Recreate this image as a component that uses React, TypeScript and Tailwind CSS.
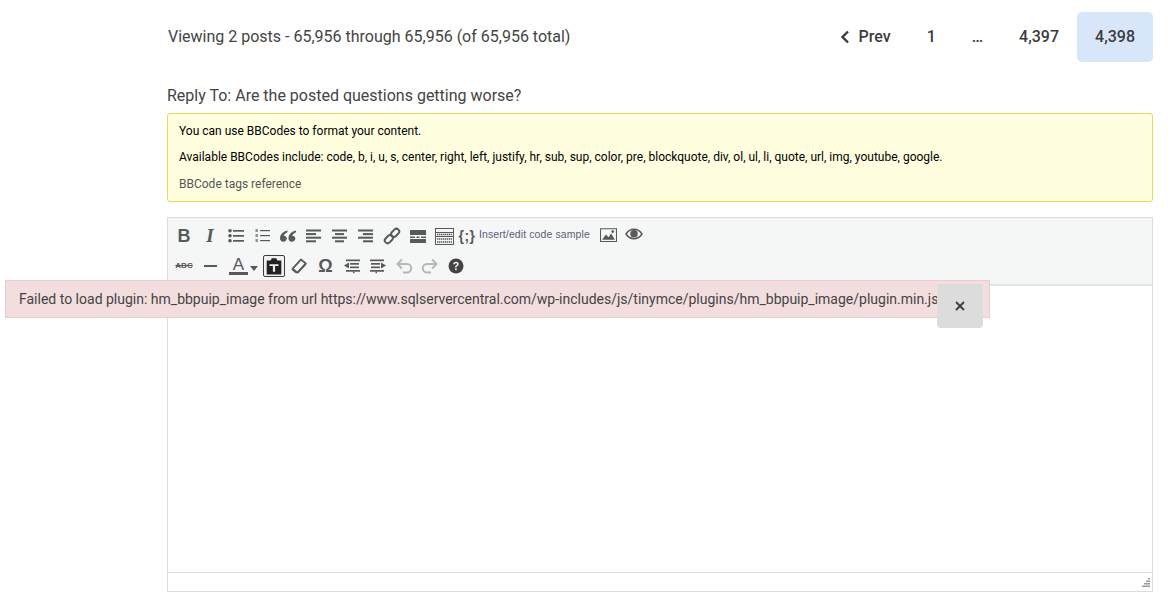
import type { ReactNode } from "react";

const Svg = ({ children, size = 16 }: { children: ReactNode; size?: number }) => (
  <svg width={size} height={size} viewBox="0 0 16 16" fill="currentColor">
    {children}
  </svg>
);

const Lines = ({ rows }: { rows: [number, number][] }) => (
  <Svg>
    {rows.map(([x, w], i) => (
      <rect key={i} x={x} y={1.5 + i * 3.6} width={w} height="2" />
    ))}
  </Svg>
);

const Btn = ({ children, w = "w-[26px]", className = "" }: { children: ReactNode; w?: string; className?: string }) => (
  <div className={`flex h-[26px] items-center justify-center text-[#595959] ${w} ${className}`}>{children}</div>
);

const BulletList = () => (
  <Svg>
    {[2, 7, 12].map((y) => (
      <g key={y}>
        <circle cx="2" cy={y + 0.8} r="1.8" />
        <rect x="5" y={y} width="11" height="1.7" />
      </g>
    ))}
  </Svg>
);

const NumberList = () => (
  <Svg>
    {[2, 7, 12].map((y) => (
      <g key={y}>
        <rect x="1.5" y={y - 1} width="2.4" height="3" opacity="0.65" />
        <rect x="6" y={y} width="10" height="1.2" />
      </g>
    ))}
  </Svg>
);

const Quote = () => (
  <Svg>
    <path d="M7.500 2.500C3 3.500 0 6.500 0 10.300c0 2.200 1.300 3.400 3.300 3.400S6.800 12.300 6.800 10.500 5.500 7.700 3.800 7.700c.3-1.500 1.800-2.800 3.700-3.500zM16 2.500c-4.500 1-7.500 4-7.500 7.800 0 2.200 1.300 3.400 3.300 3.400s3.500-1.400 3.500-3.200-1.300-2.800-3-2.800c.3-1.500 1.800-2.800 3.700-3.500z" />
  </Svg>
);

const LinkIcon = () => (
  <svg width="18" height="18" viewBox="0 0 18 18" fill="none" stroke="currentColor" strokeWidth="2">
    <rect x="-4.500" y="-2.800" width="9" height="5.600" rx="2.800" transform="translate(5.800 12.200) rotate(-45)" />
    <rect x="-4.500" y="-2.800" width="9" height="5.600" rx="2.800" transform="translate(12.200 5.800) rotate(-45)" />
  </svg>
);

const PageBreak = () => (
  <Svg>
    <rect x="0" y="2" width="16" height="5" />
    <rect x="0" y="11" width="16" height="4" />
    <rect x="0" y="8.500" width="5" height="1.500" />
    <rect x="6.500" y="8.500" width="3" height="1.500" />
    <rect x="11" y="8.500" width="5" height="1.500" />
  </Svg>
);

const Keyboard = () => (
  <svg width="19" height="17" viewBox="0 0 19 17" fill="none" stroke="currentColor">
    <rect x="0.500" y="0.500" width="18" height="16" />
    <path d="M1 4.500h17M1 8.500h17" strokeWidth="1" />
    <path d="M2 6.500h15M2 11h15M2 14h15" strokeWidth="1.600" strokeDasharray="1.400 .6" />
  </svg>
);

const ImageIcon = () => (
  <Svg size={17}>
    <path fillRule="evenodd" d="M0 2h16v13H0zM1 3v11h14V3z" />
    <path d="M2 13l3.500-5 2.500 2.500L10.500 7 14 13z" />
    <circle cx="12" cy="5.200" r="1.300" />
  </Svg>
);

const Eye = () => (
  <svg width="18" height="14" viewBox="0 0 18 14" fill="none" stroke="currentColor" strokeWidth="1.500">
    <path d="M1 7c2-3 4.800-4.700 8-4.700S15 4 17 7c-2 3-4.800 4.700-8 4.700S3 10 1 7z" />
    <circle cx="9" cy="6.800" r="3" fill="currentColor" />
  </svg>
);

const Paste = () => (
  <Svg size={18}>
    <path fillRule="evenodd" d="M1.500 3H5l1-2h4l1 2h3.500v12.500h-13zM4 6.500V8h3v5h2V8h3V6.500z" />
  </Svg>
);

const Eraser = () => (
  <svg width="16" height="16" viewBox="0 0 16 16" fill="none" stroke="currentColor" strokeWidth="1.500">
    <path d="M10 1.500l4.500 3.500a1 1 0 0 1 0 1.500L7 14.500H5L1.800 12a1 1 0 0 1 0-1.500z" />
    <path d="M1.800 10.500l4.500 4L14.500 5.500 10 1.500z" fill="none" />
  </svg>
);

const Indent = ({ flip = false }: { flip?: boolean }) => (
  <Svg>
    <g transform={flip ? "translate(16 0) scale(-1 1)" : undefined}>
      <rect x="2" y="1.500" width="14" height="1.700" />
      <rect x="6" y="5" width="9" height="1.700" />
      <rect x="6" y="8.500" width="9" height="1.700" />
      <rect x="2" y="12" width="14" height="1.700" />
      <path d="M5 4.500v6L0 7.500z" />
      <rect x="9" y="13.700" width="1.500" height="1.500" />
    </g>
  </Svg>
);

const Undo = ({ flip = false }: { flip?: boolean }) => (
  <svg width="18" height="16" viewBox="0 0 18 16" fill="none" stroke="currentColor" strokeWidth="2" className={flip ? "-scale-x-100" : ""}>
    <path d="M3 6h9a4.200 4.200 0 0 1 0 8.500H8" />
    <path d="M6.800 1.500L2.500 6l4.300 4.500" />
  </svg>
);

const Help = () => (
  <svg width="16" height="16" viewBox="0 0 16 16">
    <circle cx="8" cy="8" r="7.500" fill="currentColor" />
    <path d="M5.300 6.200C5.400 4.600 6.500 3.800 8 3.800s2.700.9 2.700 2.200c0 1.100-.7 1.600-1.400 2.100-.6.400-.8.700-.8 1.400H7.100c0-1.200.4-1.700 1.100-2.200.6-.4.900-.7.900-1.200s-.5-.9-1.100-.9-1.100.4-1.200 1z" fill="#f5f6f6" />
    <rect x="7.100" y="10.400" width="1.600" height="1.700" fill="#f5f6f6" />
  </svg>
);

const Page = ({ children, active = false }: { children: ReactNode; active?: boolean }) => (
  <div className={`flex h-[50px] items-center gap-[9px] rounded-[5px] px-[18px] font-medium text-[#3c3c3c] ${active ? "bg-[#d8e6fa]" : ""}`}>
    {children}
  </div>
);

export default function App() {
  return (
    <div className="relative h-[603px] w-[1176px] overflow-hidden bg-white pl-[167px] pr-[23px] pt-3 font-['Roboto',sans-serif] text-base text-[#444]">
      <div className="flex items-center justify-between pl-px">
        <span>Viewing 2 posts - 65,956 through 65,956 (of 65,956 total)</span>
        <div className="flex items-center">
          <Page>
            <svg width="10" height="14" viewBox="0 0 10 14" fill="none" stroke="currentColor" strokeWidth="2.400">
              <path d="M8 1.500L2.500 7 8 12.500" />
            </svg>
            Prev
          </Page>
          <Page>1</Page>
          <Page>…</Page>
          <Page>4,397</Page>
          <Page active>4,398</Page>
        </div>
      </div>

      <div className="mt-[22px] h-6 leading-6">Reply To: Are the posted questions getting worse?</div>

      <div className="mt-[5px] flex h-[89px] flex-col gap-2 rounded-[3px] border border-[#e6db55] bg-[#ffffe0] px-[11px] pt-2 text-xs leading-[18px] text-black">
        <p>You can use BBCodes to format your content.</p>
        <p>Available BBCodes include: code, b, i, u, s, center, right, left, justify, hr, sub, sup, color, pre, blockquote, div, ol, ul, li, quote, url, img, youtube, google.</p>
        <p className="mt-px text-[#555]">BBCode tags reference</p>
      </div>

      <div className="mt-[15px] flex h-[375px] flex-col border border-[#ddd]">
        <div className="flex h-[68px] flex-col gap-1 border-b-2 border-[#e2e4e7] bg-[#f5f6f6] pl-[3px] pt-[5px]">
          <div className="flex h-[26px] items-center">
            <Btn><span className="font-['Liberation_Sans',sans-serif] text-[18px] font-bold">B</span></Btn>
            <Btn><span className="font-['Liberation_Serif',serif] text-[19px] font-bold italic">I</span></Btn>
            <Btn><BulletList /></Btn>
            <Btn><NumberList /></Btn>
            <Btn><Quote /></Btn>
            <Btn><Lines rows={[[0, 15], [0, 10], [0, 15], [0, 10]]} /></Btn>
            <Btn><Lines rows={[[0, 15], [3, 9], [0, 15], [3, 9]]} /></Btn>
            <Btn><Lines rows={[[0, 15], [5, 10], [0, 15], [5, 10]]} /></Btn>
            <Btn><LinkIcon /></Btn>
            <Btn><PageBreak /></Btn>
            <Btn><Keyboard /></Btn>
            <Btn w="w-[20px]"><span className="font-['Liberation_Sans',sans-serif] text-[14px] font-bold tracking-[0.5px]">{"{;}"}</span></Btn>
            <span className="mb-1 ml-[2px] w-[116px] whitespace-nowrap font-['Liberation_Sans',sans-serif] text-[10.500px] leading-4 tracking-[0.1px] text-[#595f7a]">Insert/edit code sample</span>
            <Btn className="mb-1"><ImageIcon /></Btn>
            <Btn className="mb-1"><Eye /></Btn>
          </div>
          <div className="flex h-[26px] items-center">
            <Btn><span className="font-['Liberation_Sans',sans-serif] text-[8px] font-bold leading-none line-through">ABC</span></Btn>
            <Btn><div className="h-[2px] w-[13px] bg-current" /></Btn>
            <Btn w="w-[36px]" className="justify-start pl-[6px]">
              <span className="w-[19px] border-b-[3px] border-current text-center font-['Liberation_Sans',sans-serif] text-[17px] leading-[15px]">A</span>
              <span className="ml-[2px] mt-1 border-x-[4px] border-t-[5px] border-x-transparent border-t-current" />
            </Btn>
            <div className="ml-[4px] flex h-[22px] w-[22px] items-center justify-center rounded-[2px] border border-[#3c3c3c] bg-[#f0f0f0] text-[#222]">
              <Paste />
            </div>
            <Btn w="w-[28px]"><Eraser /></Btn>
            <Btn w="w-[25px]"><span className="font-['Liberation_Sans',sans-serif] text-[18px] font-bold">Ω</span></Btn>
            <Btn w="w-[27px]"><Indent /></Btn>
            <Btn w="w-[26px]"><Indent flip /></Btn>
            <Btn className="!text-[#b5b8bb]"><Undo /></Btn>
            <Btn className="!text-[#b5b8bb]"><Undo flip /></Btn>
            <Btn className="!text-[#444]"><Help /></Btn>
          </div>
        </div>
        <div className="flex-1 bg-white" />
        <div className="flex h-[19px] shrink-0 items-end justify-end border-t border-[#ddd] pb-[3px] pr-[2px]">
          <svg width="10" height="10" viewBox="0 0 10 10" fill="#9a9a9a">
            <path d="M8 0h2v1.500H8zM6 2.500h4V4H6zM4 5h6v1.500H4zM2 7.500h8V9H2z" />
          </svg>
        </div>
      </div>

      <div className="absolute left-[5px] top-[280px] flex h-[38px] w-[985px] items-center border border-[#ebccd1] bg-[#f2dede] pl-[13px] text-sm text-[#444]">
        <span className="whitespace-nowrap">Failed to load plugin: hm_bbpuip_image from url https://www.sqlservercentral.com/wp-includes/js/tinymce/plugins/hm_bbpuip_image/plugin.min.js</span>
        <div className="absolute left-[931px] top-[3px] flex h-[44px] w-[46px] items-center justify-center rounded-[4px] bg-[#dcdcdc]">
          <svg width="10" height="10" viewBox="0 0 10 10" stroke="#3c3c3c" strokeWidth="1.800">
            <path d="M1 1l8 8M9 1l-8 8" />
          </svg>
        </div>
      </div>
    </div>
  );
}
